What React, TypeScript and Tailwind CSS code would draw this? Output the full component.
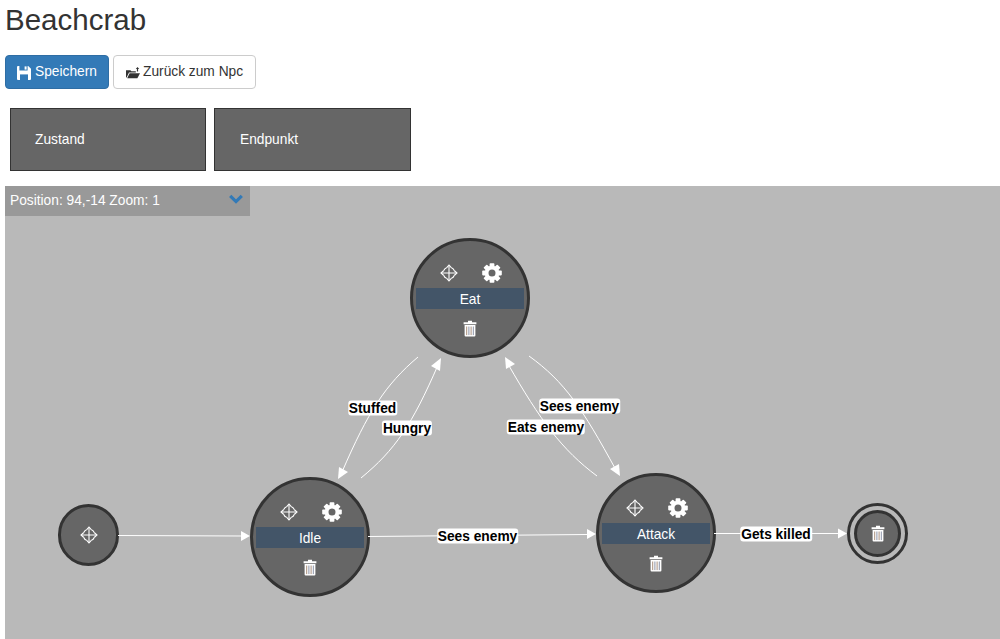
// Outline "move" handle shown on every node
function MoveIcon() {
  return (
    <svg viewBox="0 0 18 18" className="w-[18px] h-[18px]" fill="none" stroke="#fff" strokeWidth="1.1">
      <path d="M9 1.5V16.5M1.5 9H16.5" />
      <path d="M6.5 3.8L9 1 11.5 3.8M6.5 14.2L9 17 11.5 14.2M3.8 6.5L1 9 3.8 11.5M14.2 6.5L17 9 14.2 11.5" />
      <path d="M6.5 3.8Q4.5 4.5 3.8 6.5M11.5 3.8Q13.5 4.5 14.2 6.5M3.8 11.5Q4.5 13.5 6.5 14.2M14.2 11.5Q13.5 13.5 11.5 14.2" />
    </svg>
  );
}

function CogIcon() {
  return (
    <svg viewBox="0 0 20 20" className="w-5 h-5" fill="#fff">
      {[0, 45, 90, 135, 180, 225, 270, 315].map((angle) => (
        <rect key={angle} x="7.6" y="0.2" width="4.8" height="5" rx="0.8" transform={`rotate(${angle} 10 10)`} />
      ))}
      <circle cx="10" cy="10" r="5.4" fill="none" stroke="#fff" strokeWidth="3.8" />
    </svg>
  );
}

function TrashIcon() {
  return (
    <svg viewBox="0 0 14 17" className="w-[14px] h-[17px]">
      <path d="M5 .8h4v1.4h4.4v2H.6v-2H5z" fill="#fff" />
      <path d="M1.6 5h10.8v10.6a1 1 0 0 1-1 1H2.6a1 1 0 0 1-1-1z" fill="#fff" />
      <path d="M3.7 6.5v8.6" stroke="#a98f7c" strokeWidth="1" />
      <path d="M5.9 6.5v8.6" stroke="#8d94a8" strokeWidth="1" />
      <path d="M8.1 6.5v8.6" stroke="#a9917f" strokeWidth="1" />
      <path d="M10.3 6.5v8.6" stroke="#8d94a8" strokeWidth="1" />
    </svg>
  );
}

function SaveIcon() {
  return (
    <svg viewBox="0 0 14 14" className="w-[14px] h-[14px]" fill="#fff">
      <path d="M0 1a1 1 0 0 1 1-1h1.4v4.6h8.2V0h.6L14 2.8V13a1 1 0 0 1-1 1H1a1 1 0 0 1-1-1z" />
      <path d="M7.6 .4h2v3.2h-2z" />
      <path d="M3 8.4h8V14H3z" fill="#337ab7" />
    </svg>
  );
}

function OpenFolderIcon() {
  return (
    <svg viewBox="0 0 14 12" className="w-[14px] h-3" fill="#333">
      <path d="M0 3.2h4.4l1 1.1h4.4v1.2H3L.6 10.4H0z" />
      <path d="M3.6 6.3H14l-2.6 5H1.2z" />
      <path d="M11.5 0l1.7 2h-1.1v2.4h-1.2V2H9.8z" />
    </svg>
  );
}

function StateNode({ name, className }: { name: string; className: string }) {
  return (
    <div className={`absolute w-[120px] h-[120px] rounded-full border-[3px] border-[#333] bg-[#666] flex flex-col items-center pt-[22px] ${className}`}>
      <div className="flex items-center gap-[24px] h-[20px] pl-[1px]">
        <MoveIcon />
        <CogIcon />
      </div>
      <div className="mt-[5px] w-[108px] h-[21px] pt-px bg-[#435568] text-white text-[13.75px] leading-[21px] text-center">{name}</div>
      <div className="mt-[11px]">
        <TrashIcon />
      </div>
    </div>
  );
}

function EdgeLabel({ text, className }: { text: string; className: string }) {
  return (
    <div className={`absolute px-[1px] h-[15px] leading-[15px] rounded-[3px] bg-white text-black text-[13.75px] font-bold whitespace-nowrap -translate-x-1/2 -translate-y-1/2 ${className}`}>
      {text}
    </div>
  );
}

const edges = [
  'M118 535.5L243 536',
  'M368 536.5L477 535.5L588 534.5',
  'M714 533.5L840 533.5',
  'M418 357C385 385 368 412 342 472',
  'M361 478C395 450 412 425 438 365',
  'M529 356C565 382 582 408 616 470',
  'M597 476C562 450 540 420 508 364',
];

const arrows = [
  '250,536 241,531 241,541',
  '596,534 587,529 587,539',
  '847,533.5 838,528.5 838,538.5',
  '338,479 339,467 348,472',
  '441,358 431,366 440,371',
  '620,476 610,469 619,464',
  '505,357 506,369 515,364',
];

export default function App() {
  return (
    <div className="w-[1000px] h-[639px] overflow-hidden bg-white text-[#333] font-['Liberation_Sans',Arial,sans-serif]">
      <h1 className="pl-[5px] pt-[4px] text-[29.5px] leading-[32px] h-[55px]">Beachcrab</h1>

      <div className="flex gap-1 pl-[5px]">
        <button className="flex items-center gap-1 w-[104px] h-[34px] pl-[11px] pt-px rounded border border-[#2e6da4] bg-[#337ab7] text-white text-[13.75px]">
          <SaveIcon />
          Speichern
        </button>
        <button className="flex items-center gap-[3px] w-[143px] h-[34px] pl-3 pt-px rounded border border-[#ccc] bg-white text-[13.75px]">
          <OpenFolderIcon />
          Zurück zum Npc
        </button>
      </div>

      <div className="flex gap-2 pl-[10px] mt-[19px] mb-[15px]">
        <div className="w-[196px] h-[63px] pt-px border border-[#333] bg-[#666] text-white text-[13.75px] flex items-center pl-[24px]">Zustand</div>
        <div className="w-[197px] h-[63px] pt-px border border-[#333] bg-[#666] text-white text-[13.75px] flex items-center pl-[25px]">Endpunkt</div>
      </div>

      <div className="relative ml-[5px] h-[453px] bg-[#b9b9b9] overflow-hidden">
        <div className="absolute left-0 top-0 w-[245px] h-[30px] bg-[#999] text-white text-[13.75px] flex items-center justify-between pl-[5px] pr-[7px]">
          <span>Position: 94,-14 Zoom: 1</span>
          <svg viewBox="0 0 14 10" className="w-[14px] h-[10px] -mt-[4px]" fill="none" stroke="#337ab7" strokeWidth="3.2">
            <path d="M1.2 1.8L7 7.6 12.8 1.8" />
          </svg>
        </div>

        <StateNode name="Eat" className="left-[405px] top-[52px]" />
        <StateNode name="Idle" className="left-[245px] top-[291px]" />
        <StateNode name="Attack" className="left-[591px] top-[287px]" />

        {/* start point */}
        <div className="absolute left-[53px] top-[318px] w-[61px] h-[62px] rounded-full border-[3px] border-[#333] bg-[#666] flex items-center justify-center">
          <MoveIcon />
        </div>

        {/* end point */}
        <div className="absolute left-[842px] top-[317px] w-[61px] h-[61px] rounded-full border-[3px] border-[#333] flex items-center justify-center">
          <div className="w-[47px] h-[47px] rounded-full border-[3px] border-[#333] bg-[#666] flex items-center justify-center">
            <TrashIcon />
          </div>
        </div>

        <svg viewBox="5 186 995 453" className="absolute inset-0 w-[995px] h-[453px]" fill="none">
          {edges.map((d) => (
            <path key={d} d={d} stroke="#fff" strokeWidth="1" />
          ))}
          {arrows.map((points) => (
            <polygon key={points} points={points} fill="#fff" />
          ))}
        </svg>

        <EdgeLabel text="Stuffed" className="left-[367.5px] top-[222px]" />
        <EdgeLabel text="Hungry" className="left-[402px] top-[242px]" />
        <EdgeLabel text="Sees enemy" className="left-[574.5px] top-[220px]" />
        <EdgeLabel text="Eats enemy" className="left-[541px] top-[241px]" />
        <EdgeLabel text="Sees enemy" className="left-[472.5px] top-[350px]" />
        <EdgeLabel text="Gets killed" className="left-[771px] top-[348px]" />
      </div>
    </div>
  );
}
